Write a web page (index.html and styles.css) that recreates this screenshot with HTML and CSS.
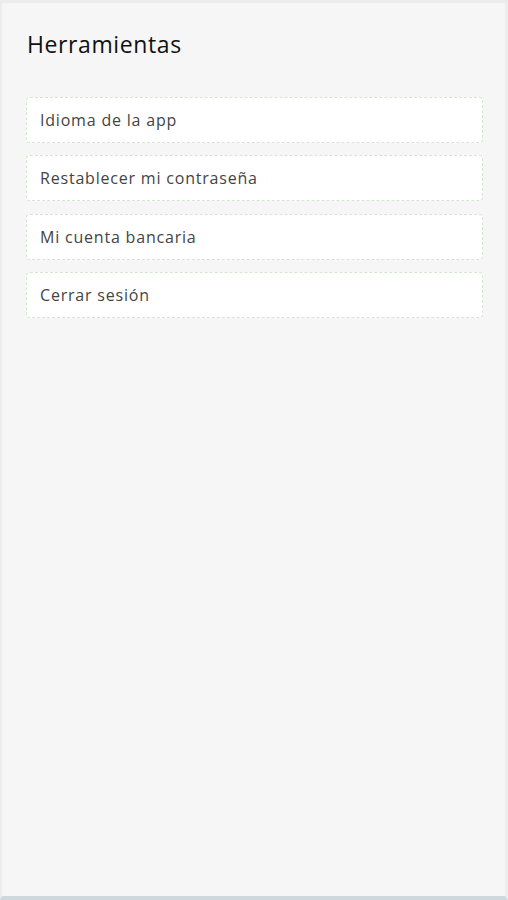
FILE: index.html
```html
<!DOCTYPE html>
<html lang="es">
<head>
    <meta charset="UTF-8">
    <meta name="viewport" content="width=device-width, initial-scale=1.0">
    <title>Herramientas</title>
    <link rel="stylesheet" href="styles.css">
</head>
<body>
    <div class="screen">
        <h1 class="title">Herramientas</h1>
        <ul class="menu">
            <li class="item">Idioma de la app</li>
            <li class="item">Restablecer mi contraseña</li>
            <li class="item">Mi cuenta bancaria</li>
            <li class="item">Cerrar sesión</li>
        </ul>
    </div>
</body>
</html>
```

FILE: styles.css
```css
html, body {
    margin: 0;
    padding: 0;
    height: 100%;
}

body {
    font-family: "Open Sans", Arial, sans-serif;
    background-color: #e9e9e9;
}

.screen {
    box-sizing: border-box;
    height: 900px;
    background-color: #f6f6f6;
    border-top: 3px solid #ececec;
    border-left: 2px solid #ececec;
    border-right: 3px solid #ededed;
    border-bottom: 4px solid #cfd8dc;
    padding: 25px 22px 0 24px;
}

.title {
    margin: 0 0 37px 1px;
    font-size: 23px;
    font-weight: 400;
    letter-spacing: 0.6px;
    color: #111;
    line-height: 32px;
}

.menu {
    list-style: none;
    margin: 0;
    padding: 0;
    display: flex;
    flex-direction: column;
    gap: 12.4px;
}

.item {
    box-sizing: border-box;
    height: 46px;
    padding: 0 13px;
    display: flex;
    align-items: center;
    background-color: #fff;
    border: 1px dashed #d3e6cf;
    border-radius: 4px;
    font-size: 16px;
    letter-spacing: 0.8px;
    color: #444;
}
```
